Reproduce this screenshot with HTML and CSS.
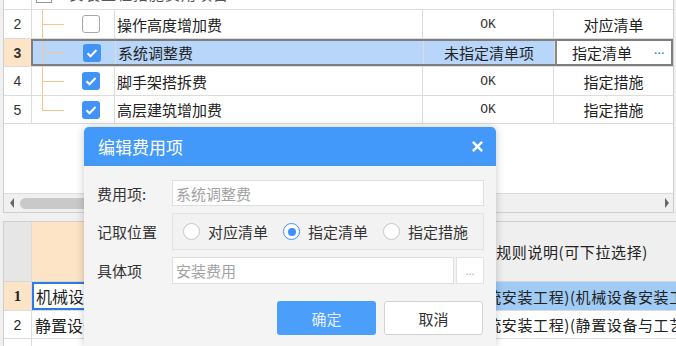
FILE: index.html
```html
<!DOCTYPE html>
<html lang="zh">
<head>
    <meta charset="UTF-8">
    <title>编辑费用项</title>
    <link rel="stylesheet" href="styles.css">
</head>
<body>
    <div class="top-grid">
        <div class="rows">
            <div class="row head-row">
                <div class="c-num"></div>
                <div class="c-group">
                    <span class="expander">−</span>
                    <span class="group-text">安装工程措施费用项目</span>
                </div>
            </div>
            <div class="row h29">
                <div class="c-num">2</div>
                <div class="row-main">
                    <div class="c-tree"><span class="branch"></span><span class="chk"></span></div>
                    <div class="c-name">操作高度增加费</div>
                    <div class="c-ok">OK</div>
                    <div class="c-type">对应清单</div>
                </div>
            </div>
            <div class="row sel">
                <div class="c-num">3</div>
                <div class="row-main">
                    <div class="c-tree"><span class="branch"></span><span class="chk on"><svg viewBox="0 0 18 18"><path d="M4.5 9.2l3 3 6-6.2" /></svg></span></div>
                    <div class="c-name">系统调整费</div>
                    <div class="c-ok cn">未指定清单项</div>
                    <div class="c-type edit"><span>指定清单</span><span class="more">···</span></div>
                </div>
            </div>
            <div class="row h29">
                <div class="c-num">4</div>
                <div class="row-main">
                    <div class="c-tree"><span class="branch"></span><span class="chk on"><svg viewBox="0 0 18 18"><path d="M4.5 9.2l3 3 6-6.2" /></svg></span></div>
                    <div class="c-name">脚手架搭拆费</div>
                    <div class="c-ok">OK</div>
                    <div class="c-type">指定措施</div>
                </div>
            </div>
            <div class="row">
                <div class="c-num">5</div>
                <div class="row-main">
                    <div class="c-tree"><span class="branch last"></span><span class="chk on"><svg viewBox="0 0 18 18"><path d="M4.5 9.2l3 3 6-6.2" /></svg></span></div>
                    <div class="c-name">高层建筑增加费</div>
                    <div class="c-ok">OK</div>
                    <div class="c-type">指定措施</div>
                </div>
            </div>
        </div>
        <div class="hscroll">
            <span class="arrow left"></span>
            <span class="thumb"></span>
            <span class="arrow right"></span>
        </div>
    </div>

    <div class="bottom-grid">
        <div class="b-row b-head">
            <div class="b-num"></div>
            <div class="b-c1 cur-col"></div>
            <div class="b-c2">计取规则说明(可下拉选择)</div>
        </div>
        <div class="b-row h29 picked">
            <div class="b-num serif">1</div>
            <div class="b-c1 cur">机械设备安装工程</div>
            <div class="b-c2">(系统安装工程)(机械设备安装工程)</div>
        </div>
        <div class="b-row">
            <div class="b-num">2</div>
            <div class="b-c1">静置设备与工艺金属结构</div>
            <div class="b-c2">(系统安装工程)(静置设备与工艺金属结构)</div>
        </div>
        <div class="b-row">
            <div class="b-num">3</div>
            <div class="b-c1">电气设备安装工程</div>
            <div class="b-c2">(系统安装工程)(电气设备安装工程)</div>
        </div>
    </div>

    <div class="dialog">
        <div class="dlg-title">
            <span>编辑费用项</span>
            <svg class="close" viewBox="0 0 14 14"><path d="M2 2l10 10M12 2L2 12" /></svg>
        </div>
        <div class="dlg-body">
            <div class="form">
                <label>费用项:</label>
                <div class="input">系统调整费</div>

                <label>记取位置</label>
                <div class="radio-box">
                    <span class="radio"></span><span class="r-text">对应清单</span>
                    <span class="radio on"></span><span class="r-text">指定清单</span>
                    <span class="radio"></span><span class="r-text">指定措施</span>
                </div>

                <label>具体项</label>
                <div class="pick">
                    <div class="input">安装费用</div>
                    <div class="pick-btn">...</div>
                </div>
            </div>
            <div class="buttons">
                <button class="ok">确定</button>
                <button class="cancel">取消</button>
            </div>
        </div>
    </div>
</body>
</html>
```

FILE: styles.css
```css
body {
    margin: 0;
    width: 676px;
    height: 346px;
    overflow: hidden;
    position: relative;
    background: #f0f0f0;
    font-family: "Noto Sans CJK SC", "Noto Sans", sans-serif;
    font-size: 15px;
    color: #222;
}
.top-grid {
    margin-left: 3px;
    width: 671px;
    height: 213px;
    box-sizing: border-box;
    background: #fff;
    border: 1px solid #cfcfcf;
    border-top: none;
    display: flex;
    flex-direction: column;
}
.rows {
    flex: 1;
}
.row {
    display: flex;
    height: 28px;
    box-sizing: border-box;
    border-bottom: 1px solid #dcdcdc;
}
.row.h29 {
    height: 29px;
}
.head-row {
    height: 10px;
    overflow: hidden;
}
.c-num {
    width: 28px;
    flex: none;
    box-sizing: border-box;
    border-right: 1px solid #dcdcdc;
    display: flex;
    align-items: center;
    justify-content: center;
    font-family: "Liberation Sans", sans-serif;
    font-size: 14px;
    color: #333;
}
.c-group {
    display: flex;
    align-items: flex-end;
    padding-bottom: 6px;
    padding-left: 4px;
    gap: 17px;
    color: #555;
}
.expander {
    width: 14px;
    height: 14px;
    flex: none;
    border: 1px solid #999;
    font-size: 11px;
    line-height: 14px;
    text-align: center;
}
.group-text {
    line-height: 18px;
    letter-spacing: 1px;
}
.row-main {
    flex: 1;
    display: flex;
}
.c-tree {
    width: 83px;
    flex: none;
    box-sizing: border-box;
    border-right: 1px solid #dcdcdc;
    display: flex;
    align-items: center;
}
.branch {
    margin-left: 10px;
    width: 21px;
    align-self: stretch;
    border-left: 1px solid #f5c68c;
    background: linear-gradient(#f5c68c, #f5c68c) no-repeat left center / 100% 1px;
}
.branch.last {
    align-self: flex-start;
    height: 50%;
    background: none;
    border-bottom: 1px solid #f5c68c;
}
.chk {
    margin-left: 18px;
    width: 18px;
    height: 18px;
    box-sizing: border-box;
    border: 1px solid #a8a8a8;
    border-radius: 3px;
    background: #fff;
}
.chk.on {
    border: none;
    background: #4193f7;
}
.chk svg {
    display: block;
    width: 18px;
    height: 18px;
    fill: none;
    stroke: #fff;
    stroke-width: 2;
}
.c-name {
    width: 308px;
    flex: none;
    box-sizing: border-box;
    border-right: 1px solid #dcdcdc;
    padding-left: 2px;
    display: flex;
    align-items: center;
}
.c-ok {
    width: 131px;
    flex: none;
    box-sizing: border-box;
    border-right: 1px solid #dcdcdc;
    display: flex;
    align-items: center;
    justify-content: center;
    font-family: "Liberation Mono", monospace;
    font-size: 13px;
    color: #333;
}
.c-ok.cn {
    font-family: "Noto Sans CJK SC", sans-serif;
    font-size: 15px;
    color: #222;
}
.c-type {
    flex: 1;
    display: flex;
    align-items: center;
    justify-content: center;
    white-space: nowrap;
}
.row.sel .c-num {
    background: #fde4c7;
    font-weight: bold;
}
.row.sel .row-main {
    background: #b7d6fa;
    border-left: 2px solid #1e6fe6;
    margin-left: -1px;
    outline: 2px solid #7e7e7e;
    outline-offset: -2px;
}
.c-type.edit {
    background: #fff;
    justify-content: space-between;
    padding: 0 8px 0 17px;
    box-shadow: inset 2px 0 0 #8a8a8a;
}
.more {
    color: #3b8cf0;
    font-family: "Liberation Sans", sans-serif;
    font-size: 11px;
    font-weight: bold;
}
.hscroll {
    height: 19px;
    box-sizing: border-box;
    border-top: 1px solid #dcdcdc;
    background: #f0f0f0;
    display: flex;
    align-items: center;
    padding: 0 4px;
}
.arrow {
    width: 0;
    height: 0;
    border-top: 5px solid transparent;
    border-bottom: 5px solid transparent;
}
.arrow.left {
    margin-left: 2px;
    border-right: 4px solid #666;
}
.arrow.right {
    margin-left: auto;
    border-left: 4px solid #666;
}
.thumb {
    margin-left: 6px;
    width: 210px;
    height: 11px;
    border-radius: 6px;
    background: #c9c9c9;
}
.bottom-grid {
    margin-top: 8px;
    margin-left: 3px;
    border-top: 1px solid #cfcfcf;
    border-left: 1px solid #cfcfcf;
    background: #fff;
}
.b-row {
    display: flex;
    height: 28px;
    box-sizing: border-box;
    border-bottom: 1px solid #dcdcdc;
}
.b-row.h29 {
    height: 29px;
}
.b-head {
    height: 60px;
    background: #efefef;
    border-bottom-color: #d6d6d6;
}
.b-num {
    width: 28px;
    flex: none;
    box-sizing: border-box;
    border-right: 1px solid #dcdcdc;
    display: flex;
    align-items: center;
    justify-content: center;
    font-family: "Liberation Sans", sans-serif;
    font-size: 14px;
}
.b-head .b-num {
    background: #e6e6e6;
}
.b-num.serif {
    background: #fde4c7;
    font-family: "Liberation Serif", serif;
    font-weight: bold;
    font-size: 15px;
}
.b-c1 {
    width: 430px;
    flex: none;
    box-sizing: border-box;
    border-right: 1px solid #dcdcdc;
    padding-left: 3px;
    display: flex;
    align-items: center;
    white-space: nowrap;
    overflow: hidden;
    font-size: 16px;
}
.b-head .cur-col {
    background: #fde4c7;
}
.b-c1.cur {
    border: 2px solid #2a7ce9;
    padding-left: 2px;
}
.b-c2 {
    flex: 1;
    padding-left: 3px;
    display: flex;
    align-items: center;
    white-space: nowrap;
    overflow: hidden;
    letter-spacing: 0.6px;
}
.picked .b-c2 {
    background: #9fcbf5;
}
.dialog {
    position: absolute;
    left: 84px;
    top: 127px;
    width: 412px;
    height: 219px;
    background: #f4f4f4;
    border-radius: 5px 5px 0 0;
    box-shadow: 0 0 8px rgba(0, 0, 0, 0.22);
    overflow: hidden;
}
.dlg-title {
    height: 39px;
    background: #4299f9;
    color: #fff;
    font-size: 17px;
    display: flex;
    align-items: center;
    justify-content: space-between;
    padding: 0 12px 0 14px;
}
.close {
    width: 13px;
    height: 13px;
    fill: none;
    stroke: #fff;
    stroke-width: 2.6;
}
.dlg-body {
    padding: 14px 13px 0;
}
.form {
    display: grid;
    grid-template-columns: 75px 1fr;
    row-gap: 7px;
    align-items: center;
}
.form label {
    color: #333;
}
.input {
    height: 26px;
    box-sizing: border-box;
    border: 1px solid #dedede;
    background: #fff;
    padding-left: 3px;
    color: #a2a2a2;
    display: flex;
    align-items: center;
}
.radio-box {
    height: 37px;
    box-sizing: border-box;
    border: 1px solid #e2e2e2;
    background: #f2f2f2;
    display: flex;
    align-items: center;
    padding-left: 10px;
    white-space: nowrap;
}
.radio {
    width: 17px;
    height: 17px;
    flex: none;
    box-sizing: border-box;
    border: 1px solid #c4c4c4;
    border-radius: 50%;
    background: #fff;
    margin-right: 8px;
    display: flex;
    align-items: center;
    justify-content: center;
}
.radio.on {
    border-color: #3f8ff5;
}
.radio.on::after {
    content: "";
    width: 8px;
    height: 8px;
    border-radius: 50%;
    background: #3f8ff5;
}
.r-text {
    flex: none;
    margin-right: 15px;
    color: #333;
}
.pick {
    display: flex;
    gap: 2px;
}
.pick .input {
    flex: 1;
    height: 27px;
}
.pick-btn {
    width: 28px;
    height: 27px;
    box-sizing: border-box;
    border: 1px solid #e2e2e2;
    background: #fff;
    color: #b0b0b0;
    font-size: 11px;
    text-align: center;
    line-height: 24px;
}
.buttons {
    margin-top: 17px;
    display: flex;
    justify-content: flex-end;
    gap: 8px;
}
.buttons button {
    width: 99px;
    height: 34px;
    border-radius: 3px;
    font-family: "Noto Sans CJK SC", sans-serif;
    font-size: 15px;
    cursor: pointer;
}
.ok {
    background: #4b9efa;
    color: #e6f1ff;
    border: none;
}
.cancel {
    background: #fff;
    color: #333;
    border: 1px solid #d2d2d2;
}
```
